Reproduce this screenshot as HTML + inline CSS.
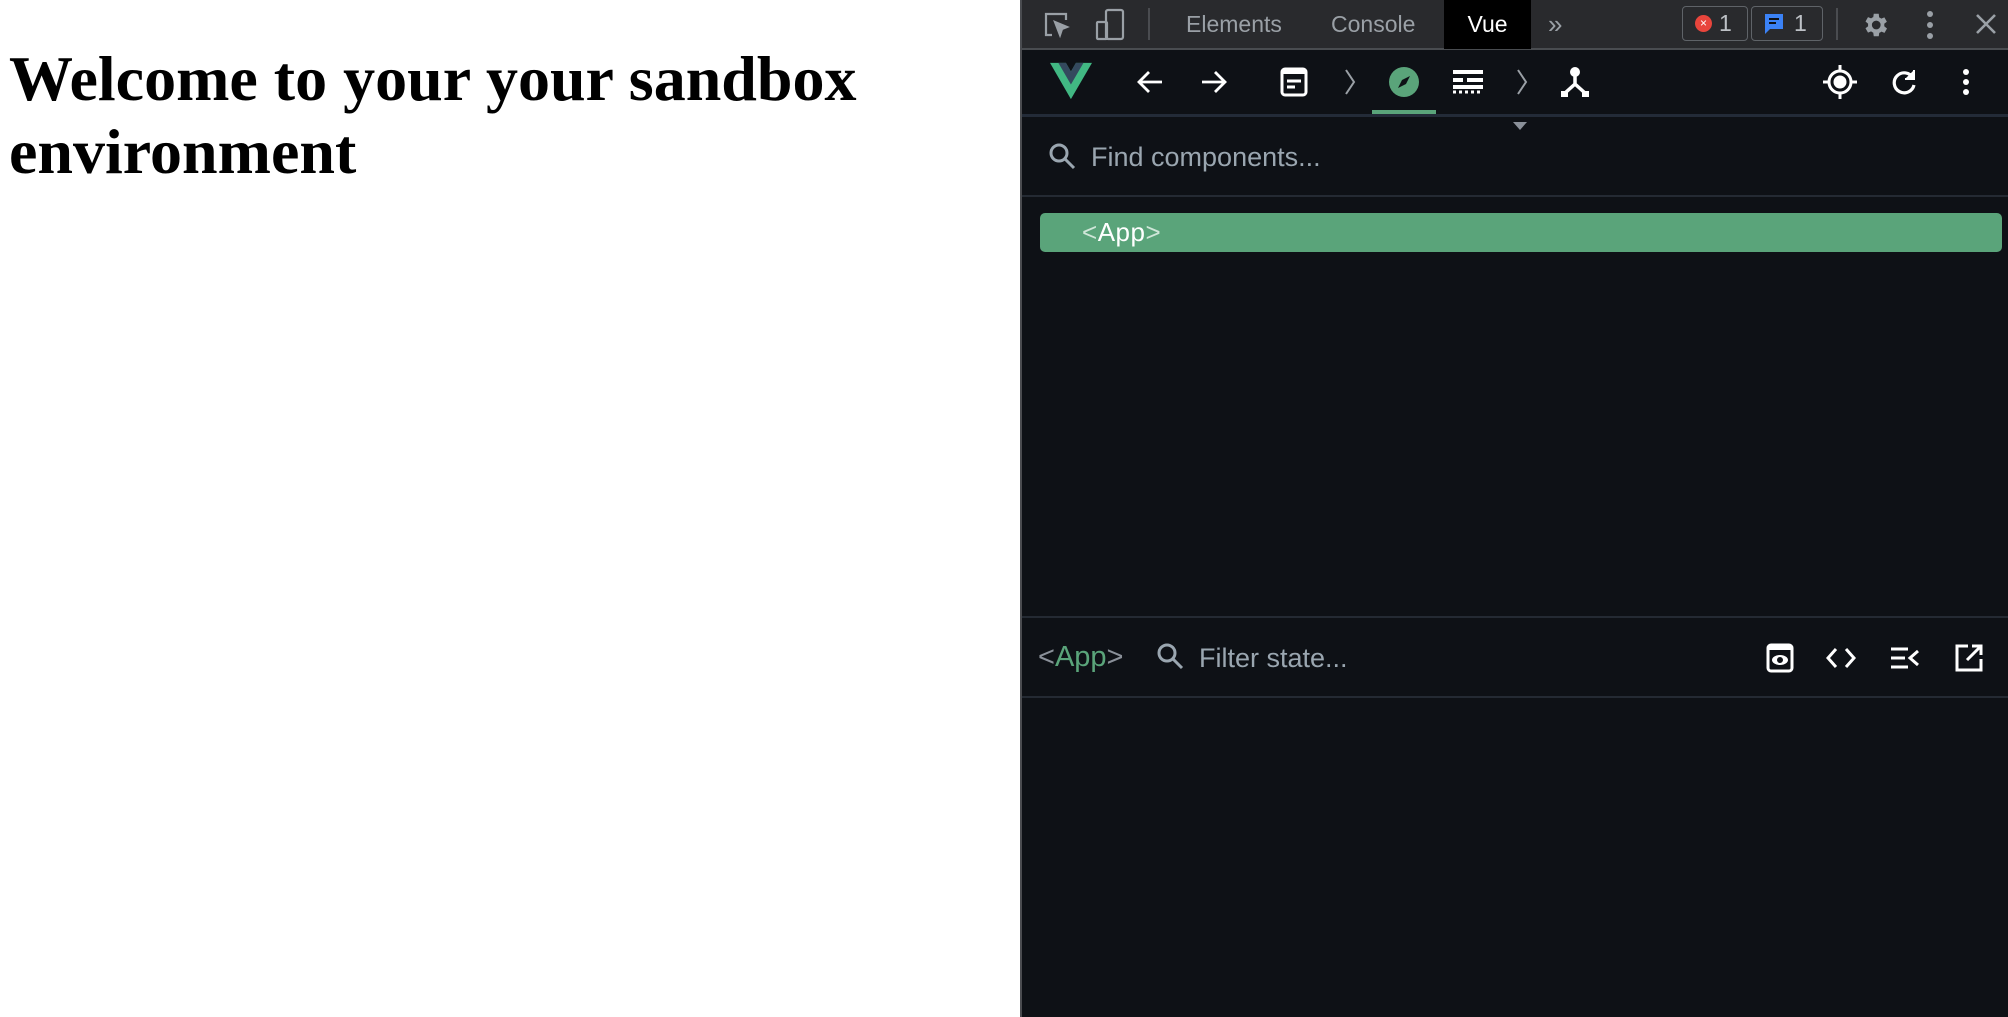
<!DOCTYPE html>
<html><head><meta charset="utf-8"><style>
*{box-sizing:border-box;margin:0;padding:0}
body{width:2008px;height:1017px;overflow:hidden;background:#fff;position:relative;font-family:"Liberation Sans",sans-serif}
h1{position:absolute;left:9px;top:42px;font-family:"Liberation Serif",serif;font-weight:bold;font-size:64px;line-height:73px;color:#000;width:1000px}
.dt{position:absolute;left:1020px;top:0;width:988px;height:1017px;background:#0e1116;border-left:2px solid #4a4c50}
.ab{position:absolute}
.top{left:0;top:0;width:988px;height:50px;background:#292a2d;border-bottom:2px solid #494c50}
.tab{position:absolute;top:0;height:49px;line-height:49px;font-size:23px;color:#9aa0a6}
.line{position:absolute;left:0;width:988px;height:2px;background:#242a33}
.txt{position:absolute;font-size:27px;color:#9aa6b0}
svg{position:absolute}
</style></head><body>
<h1>Welcome to your your sandbox environment</h1>
<div class="dt">
 <div class="ab top">
  <svg style="left:20px;top:10px" width="30" height="30" viewBox="0 0 30 30" fill="none" stroke="#9aa0a6" stroke-width="2.2"><path d="M10 25H4V4h20v6"/><path d="M13 12l12 5-5 2-2 6z" fill="#9aa0a6"/></svg>
  <svg style="left:72px;top:8px" width="32" height="34" viewBox="0 0 32 34" fill="none" stroke="#9aa0a6" stroke-width="2.2"><rect x="12" y="2" width="17" height="29" rx="2"/><rect x="3" y="14" width="10" height="17" rx="1"/></svg>
  <div class="ab" style="left:126px;top:8px;width:2px;height:32px;background:#4a4c50"></div>
  <div class="tab" style="left:164px">Elements</div>
  <div class="tab" style="left:309px">Console</div>
  <div class="tab" style="left:422px;width:87px;background:#000;color:#fff;text-align:center">Vue</div>
  <div class="tab" style="left:526px;font-size:26px">»</div>
  <div class="ab" style="left:660px;top:6px;width:66px;height:35px;border:1px solid #5f6368;border-radius:4px"></div>
  <div class="ab" style="left:673px;top:15px;width:17px;height:17px;border-radius:50%;background:#e8453c;color:#fff;font-size:12px;line-height:17px;text-align:center">×</div>
  <div class="tab" style="left:697px;top:-1px;color:#bdc1c6">1</div>
  <div class="ab" style="left:729px;top:6px;width:72px;height:35px;border:1px solid #5f6368;border-radius:4px"></div>
  <svg style="left:742px;top:13px" width="20" height="22" viewBox="0 0 20 22"><path d="M1 1h18v15H6l-5 5z" fill="#3b82f6"/><path d="M5 6h10M5 10h7" stroke="#0e1116" stroke-width="2"/></svg>
  <div class="tab" style="left:772px;top:-1px;color:#bdc1c6">1</div>
  <div class="ab" style="left:814px;top:8px;width:2px;height:32px;background:#4a4c50"></div>
  <svg style="left:838px;top:10px" width="30" height="30" viewBox="0 0 24 24"><path fill="#9aa0a6" d="M19.4 13a7.5 7.5 0 000-2l2.1-1.6-2-3.5-2.5 1a7 7 0 00-1.7-1L15 3h-4l-.4 2.7a7 7 0 00-1.7 1l-2.5-1-2 3.5L6.5 11a7.5 7.5 0 000 2l-2.1 1.6 2 3.5 2.5-1a7 7 0 001.7 1L11 21h4l.4-2.7a7 7 0 001.7-1l2.5 1 2-3.5zM13 15.5a3.5 3.5 0 110-7 3.5 3.5 0 010 7z"/></svg>
  <svg style="left:904px;top:10px" width="8" height="30" viewBox="0 0 8 30"><circle cx="4" cy="4" r="3" fill="#9aa0a6"/><circle cx="4" cy="15" r="3" fill="#9aa0a6"/><circle cx="4" cy="26" r="3" fill="#9aa0a6"/></svg>
  <svg style="left:952px;top:12px" width="24" height="24" viewBox="0 0 24 24" stroke="#9aa0a6" stroke-width="2.6"><path d="M3 3l18 18M21 3L3 21"/></svg>
 </div>
 <svg style="left:28px;top:62px" width="42" height="38" viewBox="0 0 261 226"><path d="M161 0L130 54 99 0H0l130 226L261 0z" fill="#41b883"/><path d="M161 0L130 54 99 0H52l78 135L208 0z" fill="#34495e"/></svg>
 <svg style="left:114px;top:69px" width="28" height="26" viewBox="0 0 28 26" fill="none" stroke="#fff" stroke-width="2.8"><path d="M26 13H3M13 3L3 13l10 10"/></svg>
 <svg style="left:178px;top:69px" width="28" height="26" viewBox="0 0 28 26" fill="none" stroke="#fff" stroke-width="2.8"><path d="M2 13h23M15 3l10 10-10 10"/></svg>
 <svg style="left:258px;top:67px" width="28" height="30" viewBox="0 0 28 30"><rect x="2" y="2" width="24" height="26" rx="3" fill="none" stroke="#fff" stroke-width="3"/><rect x="2" y="2" width="24" height="5" fill="#fff"/><path d="M7 14h14M7 20h8" stroke="#fff" stroke-width="3"/></svg>
 <svg style="left:322px;top:68px" width="12" height="28" viewBox="0 0 12 28" fill="none" stroke="#9aa0a6" stroke-width="2"><path d="M2 2l8 12-8 12"/></svg>
 <svg style="left:366px;top:66px" width="32" height="32" viewBox="0 0 32 32"><circle cx="16" cy="16" r="15" fill="#5aa47a"/><path d="M22 10l-4 8-8 4 4-8z" fill="#0e1116"/></svg>
 <div class="ab" style="left:350px;top:110px;width:64px;height:4px;background:#5aa47a"></div>
 <svg style="left:430px;top:69px" width="32" height="26" viewBox="0 0 32 26" fill="#fff"><rect x="1" y="1" width="30" height="4"/><rect x="1" y="9" width="10" height="4"/><rect x="15" y="9" width="16" height="4"/><rect x="1" y="16" width="30" height="4"/><path d="M1 23h30" stroke="#fff" stroke-width="3" stroke-dasharray="3 3"/></svg>
 <svg style="left:494px;top:68px" width="12" height="28" viewBox="0 0 12 28" fill="none" stroke="#9aa0a6" stroke-width="2"><path d="M2 2l8 12-8 12"/></svg>
 <svg style="left:538px;top:66px" width="30" height="32" viewBox="0 0 30 32"><circle cx="15" cy="6" r="5" fill="#fff"/><path d="M15 10v8L5 27M15 18l10 9" stroke="#fff" stroke-width="3.5" fill="none"/><rect x="1" y="25" width="7" height="6" fill="#fff"/><rect x="22" y="25" width="7" height="6" fill="#fff"/></svg>
 <svg style="left:800px;top:64px" width="36" height="36" viewBox="0 0 36 36" fill="none" stroke="#fff" stroke-width="3"><circle cx="18" cy="18" r="11"/><circle cx="18" cy="18" r="5" fill="#fff"/><path d="M18 1v6M18 29v6M1 18h6M29 18h6"/></svg>
 <svg style="left:868px;top:68px" width="28" height="28" viewBox="0 0 28 28" fill="none" stroke="#fff" stroke-width="3.2"><path d="M23 10A10 10 0 1024 17"/><path d="M24 2v9h-9" fill="#fff" stroke-width="2"/></svg>
 <svg style="left:940px;top:68px" width="8" height="28" viewBox="0 0 8 28"><circle cx="4" cy="4" r="3" fill="#fff"/><circle cx="4" cy="14" r="3" fill="#fff"/><circle cx="4" cy="24" r="3" fill="#fff"/></svg>
 <div class="line" style="top:114px;height:3px;background:#232b38"></div>
 <svg style="left:490px;top:122px" width="16" height="8" viewBox="0 0 16 8"><path d="M1 0h14L8 8z" fill="#8a9099"/></svg>
 <svg style="left:26px;top:142px" width="28" height="28" viewBox="0 0 28 28" fill="none" stroke="#9aa6b0" stroke-width="3"><circle cx="11" cy="11" r="8"/><path d="M17 17l9 9"/></svg>
 <div class="txt" style="left:69px;top:142px">Find components...</div>
 <div class="line" style="top:195px"></div>
 <div class="ab" style="left:18px;top:213px;width:962px;height:39px;background:#5aa47a;border-radius:5px"></div>
 <div class="ab" style="left:60px;top:217px;font-size:26px;color:#fff;font-family:'Liberation Sans',sans-serif;letter-spacing:0.5px"><span style="color:#cfe6d8">&lt;</span>App<span style="color:#cfe6d8">&gt;</span></div>
 <div class="line" style="top:616px"></div>
 <div class="ab" style="left:16px;top:641px;font-size:29px;color:#5aa47a"><span style="color:#8a9099">&lt;</span>App<span style="color:#8a9099">&gt;</span></div>
 <svg style="left:134px;top:642px" width="28" height="28" viewBox="0 0 28 28" fill="none" stroke="#9aa6b0" stroke-width="3"><circle cx="11" cy="11" r="8"/><path d="M17 17l9 9"/></svg>
 <div class="txt" style="left:177px;top:643px">Filter state...</div>
 <svg style="left:744px;top:643px" width="28" height="30" viewBox="0 0 28 30"><rect x="2" y="2" width="24" height="26" rx="3" fill="none" stroke="#fff" stroke-width="3"/><rect x="2" y="2" width="24" height="5" fill="#fff"/><ellipse cx="14" cy="17" rx="8" ry="5" fill="#fff"/><circle cx="14" cy="17" r="3" fill="#0e1116"/></svg>
 <svg style="left:804px;top:646px" width="30" height="24" viewBox="0 0 30 24" fill="none" stroke="#fff" stroke-width="3"><path d="M10 3L2 12l8 9M20 3l8 9-8 9"/></svg>
 <svg style="left:868px;top:646px" width="30" height="24" viewBox="0 0 30 24" fill="none" stroke="#fff" stroke-width="3"><path d="M1 3h17M1 12h14M1 21h17M28 5l-8 7 8 7"/></svg>
 <svg style="left:932px;top:643px" width="30" height="30" viewBox="0 0 30 30" fill="none" stroke="#fff" stroke-width="3"><path d="M14 3H3v24h24V16M18 3h9v9M27 3L13 17"/></svg>
 <div class="line" style="top:696px"></div>
</div>
</body></html>
